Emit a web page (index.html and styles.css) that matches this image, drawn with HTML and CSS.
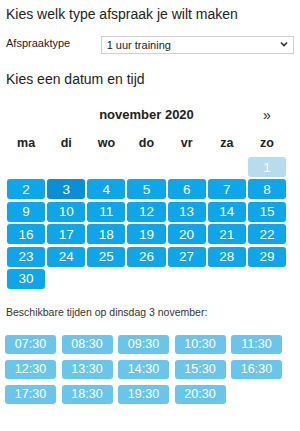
FILE: index.html
```html
<!DOCTYPE html>
<html lang="nl">
<head>
  <meta charset="UTF-8" />
  <meta name="viewport" content="width=device-width, initial-scale=1.0"/>
  <title>Afspraak maken</title>
  <link rel="stylesheet" href="styles.css">
</head>
<body>

<h2 class="kop">Kies welk type afspraak je wilt maken</h2>

<div class="type-rij">
  <label for="type">Afspraaktype</label>
  <div class="select-wrap">
    <select id="type">
      <option>1 uur training</option>
      <option>2 uur training</option>
    </select>
    <svg class="pijl" width="8" height="6" viewBox="0 0 8 6"><path d="M1 1.5 L4 4.5 L7 1.5" fill="none" stroke="#333" stroke-width="1.6"/></svg>
  </div>
</div>

<h2 class="kop kop-datum">Kies een datum en tijd</h2>

<div class="kalender">
  <div class="kal-kop">
    <span></span>
    <span class="maand">november 2020</span>
    <span class="volgende">&raquo;</span>
  </div>
  <div class="dagen">
    <span>ma</span><span>di</span><span>wo</span><span>do</span><span>vr</span><span>za</span><span>zo</span>
  </div>
  <div class="datums" id="datums"></div>
</div>

<p class="tijden-label">Beschikbare tijden op dinsdag 3 november:</p>
<div class="tijden" id="tijden"></div>

<script>
  // november 2020 begint op zondag
  const datums = document.getElementById("datums");
  for (let i = 0; i < 6; i++) {
    datums.appendChild(document.createElement("span"));
  }
  for (let d = 1; d <= 30; d++) {
    const b = document.createElement("button");
    b.className = "dag";
    if (d === 1) b.classList.add("dag-uit");
    if (d === 3) b.classList.add("dag-actief");
    b.innerText = d;
    datums.appendChild(b);
  }

  const tijden = document.getElementById("tijden");
  for (let u = 7; u <= 20; u++) {
    const t = document.createElement("button");
    t.className = "tijd";
    t.innerText = (u < 10 ? "0" + u : u) + ":30";
    tijden.appendChild(t);
  }
</script>

</body>
</html>
```

FILE: styles.css
```css
body {
  font-family: "Liberation Sans", Arial, sans-serif;
  color: #222;
  background: white;
  margin: 0;
  padding: 5px 6px 0;
}
.kop {
  font-size: 14px;
  font-weight: normal;
  line-height: 18px;
  margin: 0;
}
.kop-datum { margin-top: 16px; }

.type-rij {
  display: flex;
  align-items: center;
  margin-top: 12px;
}
.type-rij label {
  width: 95px;
  font-size: 11px;
  margin-top: -3px;
}
.select-wrap {
  position: relative;
  width: 194px;
}
.select-wrap select {
  appearance: none;
  -webkit-appearance: none;
  width: 100%;
  height: 18px;
  border: 1px solid #d0d0d0;
  border-radius: 0;
  background: white;
  font-family: inherit;
  font-size: 11px;
  color: #222;
  padding: 0 0 0 5px;
  margin: 0;
}
.pijl {
  position: absolute;
  right: 6px;
  top: 6px;
}

.kalender {
  margin: 17px 0 0 1px;
  width: 279px;
}
.kal-kop, .dagen {
  display: grid;
  grid-template-columns: repeat(7, 1fr);
  column-gap: 2px;
  text-align: center;
  font-weight: bold;
}
.kal-kop {
  font-size: 13px;
  line-height: 20px;
}
.maand { grid-column: span 5; }
.volgende { font-weight: normal; font-size: 14px; }
.dagen {
  font-size: 12.5px;
  line-height: 20px;
  margin-top: 8px;
}
.datums {
  display: grid;
  grid-template-columns: repeat(7, 1fr);
  gap: 2px;
  row-gap: 2.4px;
  margin-top: 4px;
}
.dag {
  height: 20px;
  border: none;
  border-radius: 3px;
  background-color: #0ea5e9;
  color: white;
  font-family: inherit;
  font-size: 13.5px;
  padding: 0;
  margin: 0;
}
.dag-actief { background-color: #0a8fd6; }
.dag-uit { background-color: #b6dcee; }

.tijden-label {
  font-size: 10.5px;
  color: #333;
  margin: 16px 0 0;
  line-height: 14px;
}
.tijden {
  display: grid;
  grid-template-columns: repeat(5, 51px);
  column-gap: 5.5px;
  row-gap: 6px;
  margin: 16px 0 0 -1px;
}
.tijd {
  height: 19px;
  border: none;
  border-radius: 3px;
  background-color: #6ac5ea;
  color: white;
  font-family: inherit;
  font-size: 12.5px;
  padding: 0;
  margin: 0;
}
```
